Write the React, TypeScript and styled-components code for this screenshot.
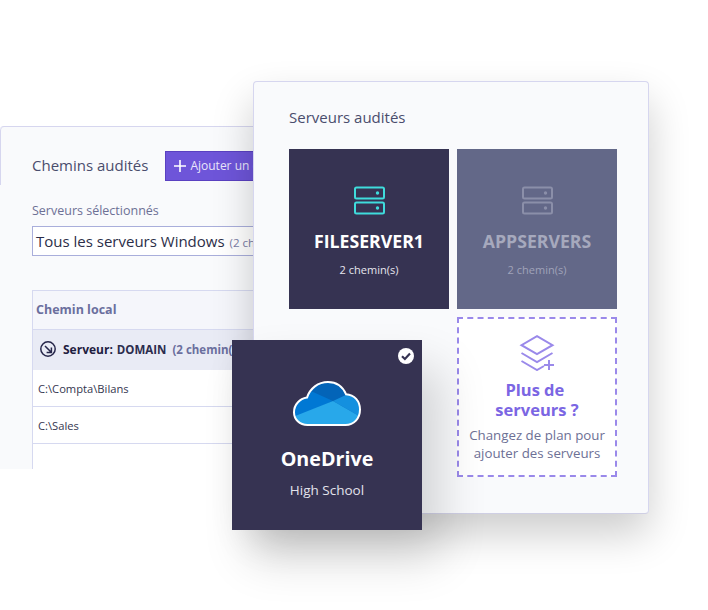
import { createGlobalStyle } from 'styled-components';
import styled from 'styled-components';

const Global = createGlobalStyle`
  html, body { margin: 0; padding: 0; background: #fff; }
  * { box-sizing: border-box; }
`;

const Stage = styled.div`
  position: relative;
  width: 708px;
  height: 610px;
  overflow: hidden;
  background: #fff;
  font-family: 'Open Sans', 'Noto Sans', sans-serif;
`;

const PathsWindow = styled.section`
  position: absolute;
  left: 0;
  top: 126px;
  width: 290px;
  height: 343px;
  background: #f9fafc;
  border-top: 1px solid #d6d6ef;
  border-top-left-radius: 4px;
  overflow: hidden;
`;

const PathsHeader = styled.header`
  display: flex;
  align-items: center;
  gap: 16px;
  height: 58px;
  padding: 19px 0 0 31px;
  border-left: 1px solid #d6d6ef;
  border-top-left-radius: 4px;
`;

const SectionTitle = styled.h2`
  margin: 0;
  font-size: 15px;
  font-weight: 400;
  line-height: 20px;
  color: #4a4d6d;
  white-space: nowrap;
`;

const PathsTitle = styled(SectionTitle)`
  margin-top: -2px;
`;

const AddButton = styled.div`
  display: flex;
  align-items: center;
  gap: 3px;
  height: 30px;
  margin-left: 1px;
  padding: 0 7px;
  color: #e9e6fb;
  font-size: 12px;
  white-space: nowrap;
  background: #6e55d9;
  border: 1px solid #5a41c1;
  flex: none;
`;

const PathsBody = styled.div`
  padding: 18px 0 0 32px;
`;

const FieldLabel = styled.div`
  font-size: 12.5px;
  line-height: 16px;
  color: #6d7095;
  margin-bottom: 7px;
`;

const SelectBox = styled.div`
  display: flex;
  align-items: baseline;
  gap: 5px;
  height: 30px;
  padding: 3px 0 0 3px;
  background: #fff;
  border: 1px solid #a9aedb;
  border-right: 0;
  font-size: 15px;
  line-height: 22px;
  color: #2c2e48;
  white-space: nowrap;
  overflow: hidden;
`;

const Muted = styled.span`
  font-size: 11.5px;
  color: #7a7da5;
`;

const PathTable = styled.div`
  margin-top: 34px;
  height: 190px;
  background: #fff;
  border-left: 1px solid #d6d9f0;
  border-top: 1px solid #d6d9f0;
`;

const HeadRow = styled.div`
  display: flex;
  align-items: center;
  height: 39px;
  padding: 0 0 2px 3px;
  background: #f5f6fb;
  border-bottom: 1px solid #d6d9f0;
  font-size: 12.5px;
  font-weight: 700;
  color: #6b6f9e;
`;

const GroupRow = styled.div`
  display: flex;
  align-items: center;
  gap: 6px;
  height: 40px;
  padding: 0 0 2px 6px;
  background: #e9ebf5;
  font-size: 12px;
  font-weight: 700;
  color: #1f2040;
  white-space: nowrap;
`;

const DomainName = styled.span`
  font-size: 11.5px;
  color: #2c2d4e;
  margin-left: 4px;
`;

const GroupCount = styled.span`
  font-size: 11.5px;
  color: #6b6f9e;
  margin-left: 6px;
`;

const PathRow = styled.div`
  display: flex;
  align-items: center;
  height: 37px;
  padding-left: 5px;
  border-bottom: 1px solid #d6d9f0;
  font-size: 11.2px;
  color: #34364f;
`;

const ServersWindow = styled.section`
  position: absolute;
  left: 253px;
  top: 81px;
  width: 396px;
  height: 433px;
  padding: 25px 31px 0 35px;
  background: #f9fafc;
  border: 1px solid #d6d6ef;
  border-bottom-color: #cfcfe4;
  border-radius: 4px;
  box-shadow: 0 20px 42px rgba(0, 0, 0, 0.2);
`;

const ServersTitle = styled(SectionTitle)`
  margin-bottom: 22px;
`;

const TileGrid = styled.div`
  display: grid;
  grid-template-columns: 160px 160px;
  grid-auto-rows: 160px;
  gap: 8px;
`;

const ServerTile = styled.div<{ $dim?: boolean }>`
  display: flex;
  flex-direction: column;
  align-items: center;
  padding-top: 37px;
  background: ${(p) => (p.$dim ? '#636888' : '#363352')};
  color: ${(p) => (p.$dim ? '#a6a9bd' : '#fff')};
`;

const TileName = styled.div`
  margin-top: 14px;
  font-size: 17.7px;
  line-height: 24px;
  font-weight: 700;
`;

const TileMeta = styled.div<{ $dim?: boolean }>`
  margin-top: 9px;
  font-size: 11px;
  line-height: 16px;
  color: ${(p) => (p.$dim ? '#a0a3b9' : '#e6e6ee')};
`;

const UpgradeTile = styled.div`
  grid-column: 2;
  display: flex;
  flex-direction: column;
  align-items: center;
  padding-top: 16px;
  text-align: center;
  background: #fff;
  border: 2px dashed #9a89ea;
`;

const UpgradeTitle = styled.div`
  margin-top: 9px;
  font-size: 16.5px;
  line-height: 20px;
  font-weight: 700;
  color: #7b66e3;
`;

const UpgradeText = styled.div`
  margin-top: 6px;
  font-size: 13.3px;
  line-height: 18px;
  color: #6d7095;
  white-space: nowrap;
`;

const DriveCard = styled.div`
  position: absolute;
  left: 232px;
  top: 340px;
  width: 190px;
  height: 190px;
  display: flex;
  flex-direction: column;
  align-items: center;
  padding-top: 41px;
  background: #363352;
  color: #fff;
  box-shadow: 18px 28px 44px rgba(0, 0, 0, 0.16);
`;

const CheckBadge = styled.svg`
  position: absolute;
  right: 8px;
  top: 8px;
`;

const DriveName = styled.div`
  margin-top: 19px;
  font-size: 19.7px;
  line-height: 28px;
  font-weight: 700;
`;

const DriveMeta = styled.div`
  margin-top: 8px;
  font-size: 13.5px;
  line-height: 18px;
  color: #e3e3ec;
`;

function ServerIcon({ color }: { color: string }) {
  return (
    <svg width="32" height="29" viewBox="0 0 32 29" fill="none">
      <rect x="2" y="1.5" width="29" height="11" rx="1.5" stroke={color} strokeWidth="2" />
      <rect x="2" y="16.5" width="29" height="11" rx="1.5" stroke={color} strokeWidth="2" />
      <circle cx="24.5" cy="7" r="1.7" fill={color} />
      <circle cx="24.5" cy="22" r="1.7" fill={color} />
    </svg>
  );
}

function GroupIcon() {
  return (
    <svg width="18" height="18" viewBox="0 0 18 18" fill="none" stroke="#26264a" strokeWidth="1.5" style={{ flex: 'none' }}>
      <circle cx="9" cy="9" r="7.2" />
      <path d="M6 6l6 6M12.4 7.6v4.8H7.6" />
    </svg>
  );
}

function LayersPlusIcon() {
  return (
    <svg width="36" height="36" viewBox="0 0 36 36" fill="none" stroke="#9a89ea" strokeWidth="2">
      <path d="M18 1.2L33.5 10.2L18 19.2L2.5 10.2Z" />
      <path d="M2.5 18l15.5 9L33.5 18" />
      <path d="M2.5 26l15.5 9l7-4" />
      <path d="M30 25v10M25 30h10" />
    </svg>
  );
}

function OneDriveLogo() {
  const cloud =
    'M14.5 44C6.5 44 1 38.3 1 31.2C1 23.5 6.6 17.8 14 16.6C17 7.5 25 1 35 1C43 1 49.6 5.4 53 13.2C61.5 13.6 67 20.3 67 28.5C67 37.5 61 44 52.5 44Z';
  return (
    <svg width="68" height="45" viewBox="0 0 68 45">
      <defs>
        <clipPath id="drive-cloud">
          <path d={cloud} />
        </clipPath>
      </defs>
      <g clipPath="url(#drive-cloud)">
        <rect width="68" height="45" fill="#0364b8" />
        <path d="M0 10L20 11L40 20L3 36L0 36Z" fill="#0078d4" />
        <path d="M40 20L55 13L68 13L68 36Z" fill="#1490df" />
        <path d="M40 20L68 36L68 45L0 45L0 36Z" fill="#28a8ea" />
      </g>
      <path d={cloud} fill="none" stroke="#fff" strokeWidth="2" />
    </svg>
  );
}

export default function App() {
  return (
    <Stage>
      <Global />
      <PathsWindow>
        <PathsHeader>
          <PathsTitle>Chemins audités</PathsTitle>
          <AddButton>
            <svg width="14" height="14" viewBox="0 0 14 14" stroke="#fff" strokeWidth="1.6">
              <path d="M7 1v12M1 7h12" />
            </svg>
            Ajouter un chemin
          </AddButton>
        </PathsHeader>
        <PathsBody>
          <FieldLabel>Serveurs sélectionnés</FieldLabel>
          <SelectBox>
            Tous les serveurs Windows <Muted>(2 chemin(s))</Muted>
          </SelectBox>
          <PathTable>
            <HeadRow>Chemin local</HeadRow>
            <GroupRow>
              <GroupIcon />
              <span>
                Serveur:
                <DomainName>DOMAIN</DomainName>
                <GroupCount>(2 chemin(s))</GroupCount>
              </span>
            </GroupRow>
            <PathRow>C:\Compta\Bilans</PathRow>
            <PathRow>C:\Sales</PathRow>
          </PathTable>
        </PathsBody>
      </PathsWindow>

      <ServersWindow>
        <ServersTitle>Serveurs audités</ServersTitle>
        <TileGrid>
          <ServerTile>
            <ServerIcon color="#3fdcdc" />
            <TileName>FILESERVER1</TileName>
            <TileMeta>2 chemin(s)</TileMeta>
          </ServerTile>
          <ServerTile $dim>
            <ServerIcon color="#8b8fa9" />
            <TileName>APPSERVERS</TileName>
            <TileMeta $dim>2 chemin(s)</TileMeta>
          </ServerTile>
          <UpgradeTile>
            <LayersPlusIcon />
            <UpgradeTitle>
              Plus de&nbsp;
              <br />
              serveurs ?
            </UpgradeTitle>
            <UpgradeText>
              Changez de plan pour
              <br />
              ajouter des serveurs
            </UpgradeText>
          </UpgradeTile>
        </TileGrid>
      </ServersWindow>

      <DriveCard>
        <CheckBadge width="16" height="16" viewBox="0 0 16 16">
          <circle cx="8" cy="8" r="8" fill="#fff" />
          <path d="M4 8.2L6.9 11L12 5.6" fill="none" stroke="#363352" strokeWidth="2.2" />
        </CheckBadge>
        <OneDriveLogo />
        <DriveName>OneDrive</DriveName>
        <DriveMeta>High School</DriveMeta>
      </DriveCard>
    </Stage>
  );
}
